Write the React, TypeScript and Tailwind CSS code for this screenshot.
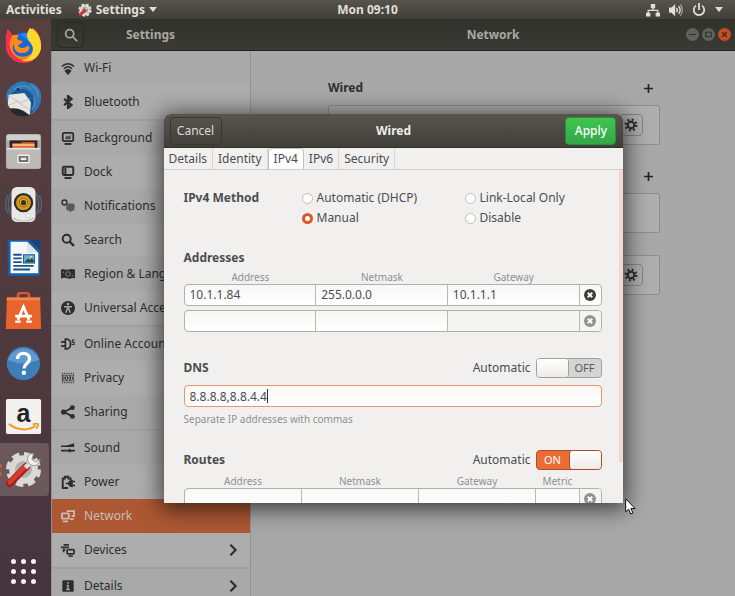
import React from "react";

type IconProps = { children: React.ReactNode; className?: string };

// Small symbolic icon, drawn on a 16 unit grid
const Glyph: React.FC<IconProps> = ({ children, className = "size-[14px]" }) => (
  <svg viewBox="0 0 16 16" className={`${className} shrink-0`} fill="none" stroke="currentColor" strokeWidth={2} aria-hidden="true">
    {children}
  </svg>
);

const GearGlyph: React.FC = () => (
  <Glyph>
    <circle cx="8" cy="8" r="3.8" strokeWidth="2.4" />
    <circle cx="8" cy="8" r="6.1" strokeWidth="2.6" strokeDasharray="2.2 2.59" />
  </Glyph>
);

const menu: { label: string; arrow?: boolean; active?: boolean; icon: React.ReactNode }[][] = [
  [
    {
      label: "Wi-Fi",
      icon: (
        <>
          <path d="M1 6.2C5 2 11 2 15 6.2M3.4 8.8c2.8-2.7 6.4-2.7 9.2 0" strokeWidth="1.8" />
          <path d="M5.4 11.4c1.6-1.5 3.6-1.5 5.2 0L8 14.6z" fill="currentColor" />
        </>
      ),
    },
    { label: "Bluetooth", icon: <path d="M3.5 4.5l8.5 7L8 15V1l4 3.5-8.5 7" strokeWidth="2.5" /> },
  ],
  [
    {
      label: "Background",
      icon: (
        <>
          <rect x="2" y="2" width="12" height="9.5" rx="1.5" />
          <path d="M4 14.8h8" strokeWidth="2.2" />
          <path d="M5 9.5V7l2-2 1.5 1.5L11 4v5.5z" fill="currentColor" stroke="none" opacity=".75" />
        </>
      ),
    },
    {
      label: "Dock",
      icon: (
        <>
          <rect x="2" y="2" width="12" height="9.5" rx="1.5" strokeWidth="2.2" />
          <path d="M4 14.8h8M5 3v8" strokeWidth="2.2" />
        </>
      ),
    },
    {
      label: "Notifications",
      icon: (
        <>
          <circle cx="4" cy="4" r="2.8" strokeWidth="1.6" />
          <path d="M8 5h6l1.5 1.5V12L14 13.5h-1.5l-2 2-.5-2H8L6 12V8.5z" fill="currentColor" stroke="none" opacity=".65" />
        </>
      ),
    },
    {
      label: "Search",
      icon: (
        <>
          <circle cx="6.5" cy="6.5" r="4.6" strokeWidth="2.2" />
          <path d="M10 10l4.8 4.8" strokeWidth="2.8" />
        </>
      ),
    },
    {
      label: "Region & Language",
      icon: (
        <>
          <path d="M0 3c3-2 5 1 8 0s5-1 8 0v10c-3-1-5 1-8 0s-5-1-8 0z" fill="currentColor" stroke="none" />
          <circle cx="8" cy="8" r="2.6" stroke="#8a8a8a" strokeWidth="1" />
          <path d="M2.5 5v2M13.5 9v2" stroke="#8a8a8a" strokeWidth="1" />
        </>
      ),
    },
    {
      label: "Universal Access",
      icon: (
        <>
          <circle cx="8" cy="8" r="8" fill="currentColor" stroke="none" />
          <circle cx="8" cy="3.4" r="1.5" fill="#aaa" stroke="none" />
          <path d="M3.5 6.5h9M8 6v3.5M7.3 8.5l-1.8 5M8.7 8.5l1.8 5" stroke="#aaa" strokeWidth="1.7" />
        </>
      ),
    },
  ],
  [
    {
      label: "Online Accounts",
      icon: (
        <>
          <path d="M0 5.5h4M0 10.5h4M5 2.5h1.5c6 0 6 11 0 11H5z" strokeWidth="2" />
          <path d="M15.5 3.5H13V6h2v2.5h-2.5" strokeWidth="1.2" />
        </>
      ),
    },
    {
      label: "Privacy",
      icon: (
        <>
          <path d="M1 3h14M1 13h14" strokeWidth="2" strokeDasharray="1.5 1" opacity=".7" />
          <path d="M1 5.5h14M1 10.5h14" strokeWidth="1.5" strokeDasharray="3 1" />
          <path d="M1 8h14" strokeWidth="2.5" strokeDasharray="1.7 1.2" />
        </>
      ),
    },
    {
      label: "Sharing",
      icon: (
        <>
          <path d="M13 3L3.5 8l9.5 5" />
          <g fill="currentColor" stroke="none">
            <circle cx="13" cy="3" r="2.8" />
            <circle cx="3" cy="8" r="3" />
            <circle cx="13" cy="13" r="2.8" />
          </g>
        </>
      ),
    },
  ],
  [
    {
      label: "Sound",
      icon: (
        <>
          <path d="M2 6.5L15 2.5v4z" fill="currentColor" stroke="none" />
          <path d="M0 6h15M0 11h16" strokeWidth="1.9" />
          <path d="M9 8.5l4 2.5-4 2.5z" fill="currentColor" stroke="none" />
        </>
      ),
    },
    {
      label: "Power",
      icon: (
        <>
          <path d="M8 14.8H2V4h2.5V2h4v2H11v2" strokeWidth="2.2" />
          <path d="M16.5 7.5H13M16.5 12H13M5.5 9.7H9" strokeWidth="1.8" />
          <path d="M13.5 5.5V14c-3 0-5.5-1.5-5.5-4.2s2.5-4.3 5.5-4.3z" fill="currentColor" stroke="none" />
        </>
      ),
    },
    {
      label: "Network",
      active: true,
      icon: (
        <>
          <rect x="1" y="5" width="8" height="6" rx="1" strokeWidth="2.2" />
          <path d="M2 14h6M6.5 2.5H15V8h-3M10.5 11.5h4" />
        </>
      ),
    },
    {
      label: "Devices",
      arrow: true,
      icon: (
        <>
          <path d="M3 2h6M0 5h9M2 7.5h3M3 8v2.5" />
          <rect x="7" y="7.5" width="8" height="5" rx="1" />
          <path d="M8.5 15h5" strokeWidth="1.8" />
        </>
      ),
    },
  ],
  [
    {
      label: "Details",
      arrow: true,
      icon: (
        <>
          <rect x="1.5" y="1.5" width="13" height="13" rx="1" fill="currentColor" stroke="none" />
          <path d="M8 3.5v2M6.5 7.5H8v4M6 12h4" stroke="#aaa" strokeWidth="1.6" />
        </>
      ),
    },
  ],
];

function SettingsArt() {
  return (
    <>
      <circle cx="20" cy="20" r="12" fill="none" stroke="#dad9d6" strokeWidth="7" />
      <circle cx="20" cy="20" r="16.5" fill="none" stroke="#dad9d6" strokeWidth="5" strokeDasharray="8 4.96" />
      <circle cx="20" cy="20" r="9" fill="#b2afae" />
      <path d="M23 17L5 35" stroke="#9e1f1c" strokeWidth="8" strokeLinecap="round" />
      <path d="M22 17L5 34" stroke="#d93a32" strokeWidth="5" strokeLinecap="round" />
      <path d="M22 18l5-5" stroke="#deddda" strokeWidth="5" />
      <path d="M27 3c-4 4-3 10 1 12s9 0 10-6l-5 3-4-3 2-6z" fill="#f2f1ef" stroke="#8f8d8b" />
    </>
  );
}

const dockApps: { name: string; running?: boolean; art: React.ReactNode }[] = [
  {
    name: "Firefox",
    art: (
      <>
        <circle cx="20" cy="21" r="15" fill="#1668d8" />
        <path d="M17 8c7-4 14 0 15 5l-7 2z" fill="#1b8af2" />
        <path d="M3 3c2 1 3 4 5 6 2-1 5-1 7 0-2 2-2 4-1 5l5 1c0 3-4 3-5 5 2 4 8 3 11 0 4 3-1 9-7 8-7 0-9-6-8-10-2 2-3 7 2 12 8 5 19 1 20-8 1-6-5-7-5-12 0-4 1-7 3-9 4 3 9 9 9 19 0 11-9 18-19 18S1 31 1 20c0-5 0-10 2-17z" fill="#ff8a16" />
        <path d="M3 3c2 1 3 4 5 6L5 16c-1 9 5 19 17 20 6 0 10-2 13-6-4 8-10 9-15 9C9 39 1 31 1 20c0-5 0-10 2-17z" fill="#f5304c" />
        <path d="M27 1c-4 5-4 10-1 14 2 3 5 6 4 10-1 7-7 11-13 11 11 4 22-4 22-15 0-10-5-17-12-20z" fill="#ffd82b" />
      </>
    ),
  },
  {
    name: "Thunderbird",
    art: (
      <>
        <circle cx="21" cy="20" r="18" fill="#1d5794" />
        <path d="M8 6C13 1 21 0 25 3c10 0 15 9 14 18-1 8-6 14-12 17 7-8 7-18 2-23-5-6-14-7-20-2-4 3-6 7-6 11C0 18 1 10 8 6z" fill="#3178b5" />
        <path d="M10 10c6-5 14-4 18 0M28 5c5 3 8 8 8 14M31 18c2 5 1 10-2 14" stroke="#4f8fc4" strokeWidth="1.5" fill="none" />
        <path d="M4 16l17-2 7 10-1 13c-11 4-20-1-24-11z" fill="#e8e6e1" />
        <path d="M4 17l13 8 10-5M3 28l10-5 14 10" stroke="#c4c2be" strokeWidth="1" fill="none" />
        <path d="M5 31c8-2 16 2 21 7-8 3-17 1-21-7z" fill="#25282c" />
        <circle cx="14" cy="10" r="1.3" fill="#102c4c" />
      </>
    ),
  },
  {
    name: "Files",
    art: (
      <>
        <rect x="1" y="1" width="38" height="38" rx="3" fill="#aaa9a5" />
        <rect x="2" y="2" width="36" height="6" rx="2" fill="#d0cfcb" />
        <rect x="5" y="8" width="30" height="11" fill="#292524" />
        <path d="M8 11h9l2-1h13v9H8z" fill="#e66b2d" />
        <path d="M8 13h24" stroke="#ffd6ae" strokeWidth="1.5" />
        <path d="M2 16h36v20q0 2-2 2H4q-2 0-2-2z" fill="#bbbab6" />
        <path d="M2 17h36" stroke="#e6e5e1" strokeWidth="1.5" />
        <rect x="14" y="24" width="12" height="8" rx="1" fill="#72716e" stroke="#f2f1ee" strokeWidth="1.5" />
        <path d="M17 28h6" stroke="#efeeea" strokeWidth="2.5" />
      </>
    ),
  },
  {
    name: "Rhythmbox",
    art: (
      <>
        <path d="M3 10q-5 10 0 19M37 10q5 10 0 19M6 8q-5 12 0 23M34 8q5 12 0 23" stroke="#4e6679" strokeWidth="1.5" fill="none" />
        <rect x="7" y="1" width="26" height="38" rx="6" fill="#e9e8e5" />
        <path d="M9 34q11 7 22 0v2q-11 5-22 0z" fill="#b9b8b4" />
        <circle cx="20" cy="18" r="10.5" fill="#302e2c" />
        <circle cx="20" cy="18" r="8" fill="#d39b1b" />
        <circle cx="20" cy="18" r="4.6" fill="#e9b22f" stroke="#8a6210" />
        <circle cx="20" cy="18" r="2.8" fill="#37322b" />
        <circle cx="25" cy="32" r="2.5" fill="#fff" stroke="#c7c6c3" />
      </>
    ),
  },
  {
    name: "LibreOffice Writer",
    art: (
      <>
        <path d="M3 1h23l12 12v27H3z" fill="#1560a5" />
        <path d="M28 1h10v10z" fill="#0c4784" />
        <path d="M6 3h18l12 12v22H6z" fill="#f6f7f8" />
        <path d="M24 3v12h12z" fill="#dce4ec" />
        <path d="M9 17h9M9 21h9M9 25h9M9 29h22M9 33h18" stroke="#17548e" strokeWidth="2" />
        <rect x="20" y="17" width="12" height="9" fill="#69aad7" stroke="#17548e" />
        <path d="M21 25l4-4 2 2 2-3 3 5z" fill="#234e37" />
        <circle cx="28" cy="19.5" r="1.2" fill="#ffe268" />
      </>
    ),
  },
  {
    name: "Ubuntu Software",
    art: (
      <>
        <path d="M14 9V4q0-3 3-3h6q3 0 3 3v5" stroke="#d6592a" strokeWidth="3" fill="none" />
        <path d="M2 6h36l1 34H1z" fill="#e9642c" />
        <path d="M2 6h36v3H2z" fill="#f4854e" />
        <path d="M14 30l6-14 6 14M11 26h18" stroke="#fff" strokeWidth="3" fill="none" />
        <path d="M11 32h6M23 32h6" stroke="#fff" strokeWidth="2.5" />
      </>
    ),
  },
  {
    name: "Help",
    art: (
      <>
        <circle cx="20" cy="20" r="18" fill="#3d7db8" />
        <path d="M3 16a18 18 0 0 1 34 0q-17 8-34 0z" fill="#5d9bd0" />
        <path d="M13.5 15c0-4 3-6 6.5-6s6.5 2 6.5 6c0 5-6 5-6 10.5" stroke="#fff" strokeWidth="3.6" fill="none" />
        <circle cx="20.4" cy="30" r="2.4" fill="#fff" />
      </>
    ),
  },
  {
    name: "Amazon",
    art: (
      <>
        <rect x="1" y="1" width="38" height="38" rx="2" fill="#f2f1ef" />
        <text x="20" y="26" textAnchor="middle" fontSize="27" fontWeight="bold" fontFamily="Liberation Sans, sans-serif" fill="#252525">
          a
        </text>
        <path d="M4 28c9 7 21 8 29 2" stroke="#f39a1d" strokeWidth="2.2" fill="none" />
        <path d="M30 28.5c3-1 6-1 6 0s-1 3-2 5" stroke="#f39a1d" strokeWidth="1.8" fill="none" />
      </>
    ),
  },
  {
    name: "Settings",
    running: true,
    art: <SettingsArt />,
  },
];

const TopBar: React.FC = () => (
  <header className="relative flex h-[19px] shrink-0 items-center justify-between bg-linear-to-b from-[#57544a] to-[#403f3a] px-1.5 text-[12px] font-bold text-[#e2dfd8]">
    <div className="flex items-center gap-4">
      <button>Activities</button>
      <button className="flex items-center gap-1">
        <svg viewBox="0 0 40 40" className="size-[14px]" aria-hidden="true">
          <SettingsArt />
        </svg>
        Settings
        <svg viewBox="0 0 8 5" className="w-2" fill="currentColor" aria-hidden="true">
          <path d="M0 0h8L4 5z" />
        </svg>
      </button>
    </div>
    <button className="absolute left-1/2 -translate-x-1/2">Mon 09:10</button>
    <div className="flex items-center gap-[9px] pr-1.5">
      <Glyph>
        <path d="M5.5 1h5v5h-5zM0 11h5v4.500H0zM11 11h5v4.500h-5z" fill="currentColor" stroke="none" />
        <path d="M8 5v3M2.5 12V8.5h11V12" strokeWidth="1.4" />
      </Glyph>
      <Glyph>
        <path d="M0 5h3l4-4v14l-4-4H0z" fill="currentColor" stroke="none" />
        <path d="M8.5 5.5q2 2.5 0 5M11 3.5q3.5 4.5 0 9" strokeWidth="1.6" />
        <path d="M13 1.5q4.5 6.5 0 13" strokeWidth="1.4" opacity=".6" />
      </Glyph>
      <Glyph>
        <path d="M4.500 3a6 6 0 1 0 7 0M8 0v8" />
      </Glyph>
      <svg viewBox="0 0 8 5" className="w-2" fill="currentColor" aria-hidden="true">
        <path d="M0 0h8L4 5z" />
      </svg>
    </div>
  </header>
);

const Dock: React.FC = () => (
  <nav aria-label="Dock" className="flex w-[51px] shrink-0 flex-col bg-linear-to-b from-[#5a3f40] via-[#4f3a3e] to-[#46343d]">
    {dockApps.map((app) => (
      <button
        key={app.name}
        aria-label={app.name}
        className={`relative flex h-[53px] w-[49px] shrink-0 items-center justify-center rounded-r-sm pr-[3px] ${app.running ? "bg-[#6b585c]" : ""}`}
      >
        <svg viewBox="0 0 40 40" className="size-[37px]">
          {app.art}
        </svg>
        {app.running && (
          <span className="absolute left-0 flex flex-col gap-1">
            <i className="h-1 w-0.5 rounded-r-full bg-[#e95420]" />
            <i className="h-1 w-0.5 rounded-r-full bg-[#e95420]" />
          </span>
        )}
      </button>
    ))}
    <button aria-label="Show applications" className="mt-auto flex justify-center pr-[5px] pb-3">
      <span className="grid grid-cols-3 gap-[5px]">
        {Array.from({ length: 9 }, (_, i) => (
          <i key={i} className="size-[5px] rounded-full bg-[#f2f0f0]" />
        ))}
      </span>
    </button>
  </nav>
);

const TitleBar: React.FC = () => (
  <div className="flex h-8 shrink-0 border-b border-[#23241f] bg-linear-to-b from-[#31322c] to-[#3a3a34] text-[12px] font-bold text-[#a9a7a2]">
    <div className="flex w-[200px] shrink-0 items-center">
      <button aria-label="Search" className="ml-1.5 flex h-[26px] w-[27px] items-center justify-center rounded-sm border border-[#292a25]">
        <Glyph>
          <circle cx="6.5" cy="6.5" r="4.6" />
          <path d="M10 10l5 5" />
        </Glyph>
      </button>
      <h1 className="flex-1 pr-[34px] text-center">Settings</h1>
    </div>
    <div className="relative flex flex-1 items-center justify-center">
      <h2>Network</h2>
      <div className="absolute right-1 flex gap-[3px]">
        <button aria-label="Minimize" className="flex size-[13px] items-center justify-center rounded-full bg-[#62615c] text-[#30302b]">
          <Glyph className="size-[9px]"><path d="M2 8h12" /></Glyph>
        </button>
        <button aria-label="Maximize" className="flex size-[13px] items-center justify-center rounded-full bg-[#62615c] text-[#30302b]">
          <Glyph className="size-[9px]"><path d="M3 4h10v8H3z" /></Glyph>
        </button>
        <button aria-label="Close" className="flex size-[13px] items-center justify-center rounded-full bg-[#c04e26] text-[#39241b]">
          <Glyph className="size-[9px]"><path d="M4 4l8 8M12 4l-8 8" /></Glyph>
        </button>
      </div>
    </div>
  </div>
);

const Sidebar: React.FC = () => (
  <nav aria-label="Settings" className="w-[200px] shrink-0 overflow-hidden border-x border-[#929292] bg-[#adadad] text-[12px] text-[#2b2e2f]">
    {menu.map((group, g) => (
      <ul key={g} className={g > 0 ? "border-t-2 border-[#a0a0a0]" : ""}>
        {group.map((item) => (
          <li key={item.label} className="odd:bg-[#a9a9a9]">
            <button
              className={`flex h-[34px] w-full items-center gap-[9px] pr-2.5 pl-[9px] text-left whitespace-nowrap ${item.active ? "bg-[#ad5833] text-[#c9bcb5]" : ""}`}
            >
              <Glyph>{item.icon}</Glyph>
              <span className="flex-1">{item.label}</span>
              {item.arrow && (
                <Glyph>
                  <path d="M5 2l6 6-6 6" strokeWidth="2.4" />
                </Glyph>
              )}
            </button>
          </li>
        ))}
      </ul>
    ))}
  </nav>
);

const AddButton: React.FC<{ label: string }> = ({ label }) => (
  <button aria-label={label} className="flex size-6 items-center justify-center text-[#242424]">
    <Glyph className="size-[9px]">
      <path d="M8 0v16M0 8h16" strokeWidth="3" />
    </Glyph>
  </button>
);

const ConnectionCard: React.FC<{ gear?: boolean }> = ({ gear }) => (
  <div className="flex h-10 items-center justify-end rounded-xs border border-[#8d8d8d] bg-[#aeaeae] px-4">
    {gear && (
      <button aria-label="Options" className="flex h-[22px] w-6 items-center justify-center rounded-sm border border-[#858585] text-[#303030]">
        <GearGlyph />
      </button>
    )}
  </div>
);

const NetworkPanel: React.FC = () => (
  <main className="flex-1 bg-[#a8a8a8] pt-[25px] pl-0.5 text-[12px]">
    <div className="mx-auto w-full max-w-[332px]">
      <div className="mb-[5px] flex items-center justify-between font-bold text-[#2d3031]">
        <h3>Wired</h3>
        <AddButton label="Add wired connection" />
      </div>
      <ConnectionCard gear />
      <div className="mt-[19px] mb-[5px] flex justify-end">
        <AddButton label="Add VPN" />
      </div>
      <ConnectionCard />
      <div className="mt-[22px]">
        <ConnectionCard gear />
      </div>
    </div>
  </main>
);

const Toggle: React.FC<{ on?: boolean }> = ({ on }) => (
  <label className="flex items-center gap-[5px]">
    Automatic
    <input type="checkbox" role="switch" defaultChecked={on} className="sr-only" />
    <span
      className={`flex h-5 w-[66px] items-stretch rounded-sm border ${
        on ? "border-[#a5502a] bg-[#ec6c36] text-white" : "flex-row-reverse border-[#a0a09d] bg-[#d4d4d2] text-[#5a5e60]"
      }`}
    >
      <span className="flex flex-1 items-center justify-center text-[11px]">{on ? "ON" : "OFF"}</span>
      <span className={`w-8 rounded-[3px] bg-linear-to-b from-white to-[#ecebe9] ${on ? "border-l border-[#a5502a]" : "border-r border-[#a0a09d]"}`} />
    </span>
  </label>
);

const Choice: React.FC<{ label: string; checked?: boolean }> = ({ label, checked }) => (
  <label className="flex h-5 items-center gap-1">
    <input
      type="radio"
      name="method"
      defaultChecked={checked}
      className="size-[11px] appearance-none rounded-full border border-[#bdbdba] bg-white checked:border-[3px] checked:border-[#d9572a]"
    />
    {label}
  </label>
);

const AddressRow: React.FC<{ columns: string[]; values?: string[]; disabled?: boolean }> = ({ columns, values = [], disabled }) => (
  <div
    className={`grid h-[22px] overflow-hidden rounded-sm border border-[#b0b0ad] bg-linear-to-b from-[#f7f7f6] to-white ${
      columns.length > 3 ? "grid-cols-[1fr_1fr_1fr_44px_21px]" : "grid-cols-[1fr_1fr_1fr_21px]"
    }`}
  >
    {columns.map((column, i) => (
      <input
        key={column}
        aria-label={column}
        defaultValue={values[i]}
        className={`min-w-0 border-r border-[#b8b8b5] px-[5px] outline-none ${disabled && i === 2 && columns.length === 3 ? "bg-[#f4f4f2]" : ""}`}
      />
    ))}
    <button aria-label="Remove" disabled={disabled} className={`flex items-center justify-center ${disabled ? "bg-[#f4f4f2] text-[#929292]" : "text-[#3d3d3d]"}`}>
      <Glyph className="size-3">
        <circle cx="8" cy="8" r="8" fill="currentColor" stroke="none" />
        <path d="M5 5l6 6M11 5l-6 6" stroke="#fff" strokeWidth="2.4" />
      </Glyph>
    </button>
  </div>
);

const ColumnHeads: React.FC<{ columns: string[] }> = ({ columns }) => (
  <div
    className={`grid px-px text-center text-[10px] leading-[14px] text-[#8e9192] ${
      columns.length > 3 ? "grid-cols-[1fr_1fr_1fr_44px_21px]" : "grid-cols-[1fr_1fr_1fr_21px]"
    }`}
  >
    {columns.map((column) => (
      <span key={column}>{column}</span>
    ))}
  </div>
);

const tabs = ["Details", "Identity", "IPv4", "IPv6", "Security"];
const addressColumns = ["Address", "Netmask", "Gateway"];
const routeColumns = ["Address", "Netmask", "Gateway", "Metric"];

const ConnectionDialog: React.FC = () => (
  <section
    role="dialog"
    aria-label="Wired"
    className="relative flex max-h-full w-full max-w-[459px] flex-col overflow-hidden rounded-t-md bg-[#f1f0ef] text-[12px] text-[#4a4e50] shadow-[0_3px_22px_3px_rgba(0,0,0,0.65)]"
  >
    <header className="flex h-[34px] shrink-0 items-center justify-between border-b border-[#30302c] bg-linear-to-b from-[#58554c] to-[#403f3a] px-1.5 text-[#dedbd4]">
      <button className="h-7 w-[52px] rounded-sm border border-[#37362f]">Cancel</button>
      <h2 className="font-bold text-[#f0eee9]">Wired</h2>
      <button className="h-7 w-[51px] rounded-sm border border-[#2c8f3b] bg-linear-to-b from-[#3fc650] to-[#33a746] font-medium text-white">Apply</button>
    </header>

    <div role="tablist" className="flex h-[22px] shrink-0 border-b border-[#cfcfcc]">
      {tabs.map((tab) => (
        <button
          key={tab}
          role="tab"
          aria-selected={tab === "IPv4"}
          className="border-r border-[#d6d6d3] px-[5px] aria-selected:rounded-t-sm aria-selected:border aria-selected:border-b-0 aria-selected:border-[#c2c2bf] aria-selected:bg-white"
        >
          {tab}
        </button>
      ))}
    </div>

    <div className="min-h-0 flex-1 overflow-y-auto pt-[18px] pr-[21px] pl-5 [scrollbar-width:none]">
      <fieldset className="grid grid-cols-[118px_1fr_137px] items-start">
        <legend className="float-left h-5 leading-5 font-bold">IPv4 Method</legend>
        <div>
          <Choice label="Automatic (DHCP)" />
          <Choice label="Manual" checked />
        </div>
        <div>
          <Choice label="Link-Local Only" />
          <Choice label="Disable" />
        </div>
      </fieldset>

      <h3 className="mt-5 leading-5 font-bold">Addresses</h3>
      <div className="mt-[2px]">
        <ColumnHeads columns={addressColumns} />
        <div className="flex flex-col gap-1">
          <AddressRow columns={addressColumns} values={["10.1.1.84", "255.0.0.0", "10.1.1.1"]} />
          <AddressRow columns={addressColumns} disabled />
        </div>
      </div>

      <div className="mt-[26px] flex items-center justify-between">
        <h3 className="font-bold">DNS</h3>
        <Toggle />
      </div>
      <div className="relative mt-[7px]">
        <input
          aria-label="DNS"
          defaultValue="8.8.8.8,8.8.4.4"
          className="h-[22px] w-full rounded-sm border border-[#e9966c] bg-linear-to-b from-[#f9f8f7] to-white px-[5px] outline-none"
        />
        {/* text caret */}
        <i className="absolute top-1 left-[83px] h-3.5 w-px bg-[#2e2e2e]" />
      </div>
      <p className="mt-[5px] text-[10px] leading-[14px] text-[#8e9192]">Separate IP addresses with commas</p>

      <div className="mt-6 flex items-center justify-between">
        <h3 className="font-bold">Routes</h3>
        <Toggle on />
      </div>
      <div className="mt-1">
        <ColumnHeads columns={routeColumns} />
        <AddressRow columns={routeColumns} disabled />
      </div>
    </div>

    {/* scrollbar thumb */}
    <i className="absolute top-14 right-0 h-3/4 w-1 bg-[#f3d9cd]" />
  </section>
);

const App: React.FC = () => (
  <div className="relative flex h-screen flex-col overflow-hidden font-['Noto_Sans','Open_Sans',sans-serif]">
    <TopBar />
    <div className="flex min-h-0 flex-1">
      <Dock />
      <div className="relative flex min-w-0 flex-1 flex-col">
        <TitleBar />
        <div className="flex min-h-0 flex-1">
          <Sidebar />
          <NetworkPanel />
        </div>
        <div className="absolute inset-0 flex items-start justify-center pt-[95px] pb-[93px]">
          <ConnectionDialog />
        </div>
      </div>
    </div>
    {/* mouse pointer */}
    <svg viewBox="0 0 11 17" className="absolute top-[498px] left-[625px] h-[17px] w-[11px]" aria-hidden="true">
      <path d="M.7.8v13l3-2.6 2 4.8 2.200-1-2-4.500h4.200z" fill="#fff" stroke="#111" />
    </svg>
  </div>
);

export default App;
